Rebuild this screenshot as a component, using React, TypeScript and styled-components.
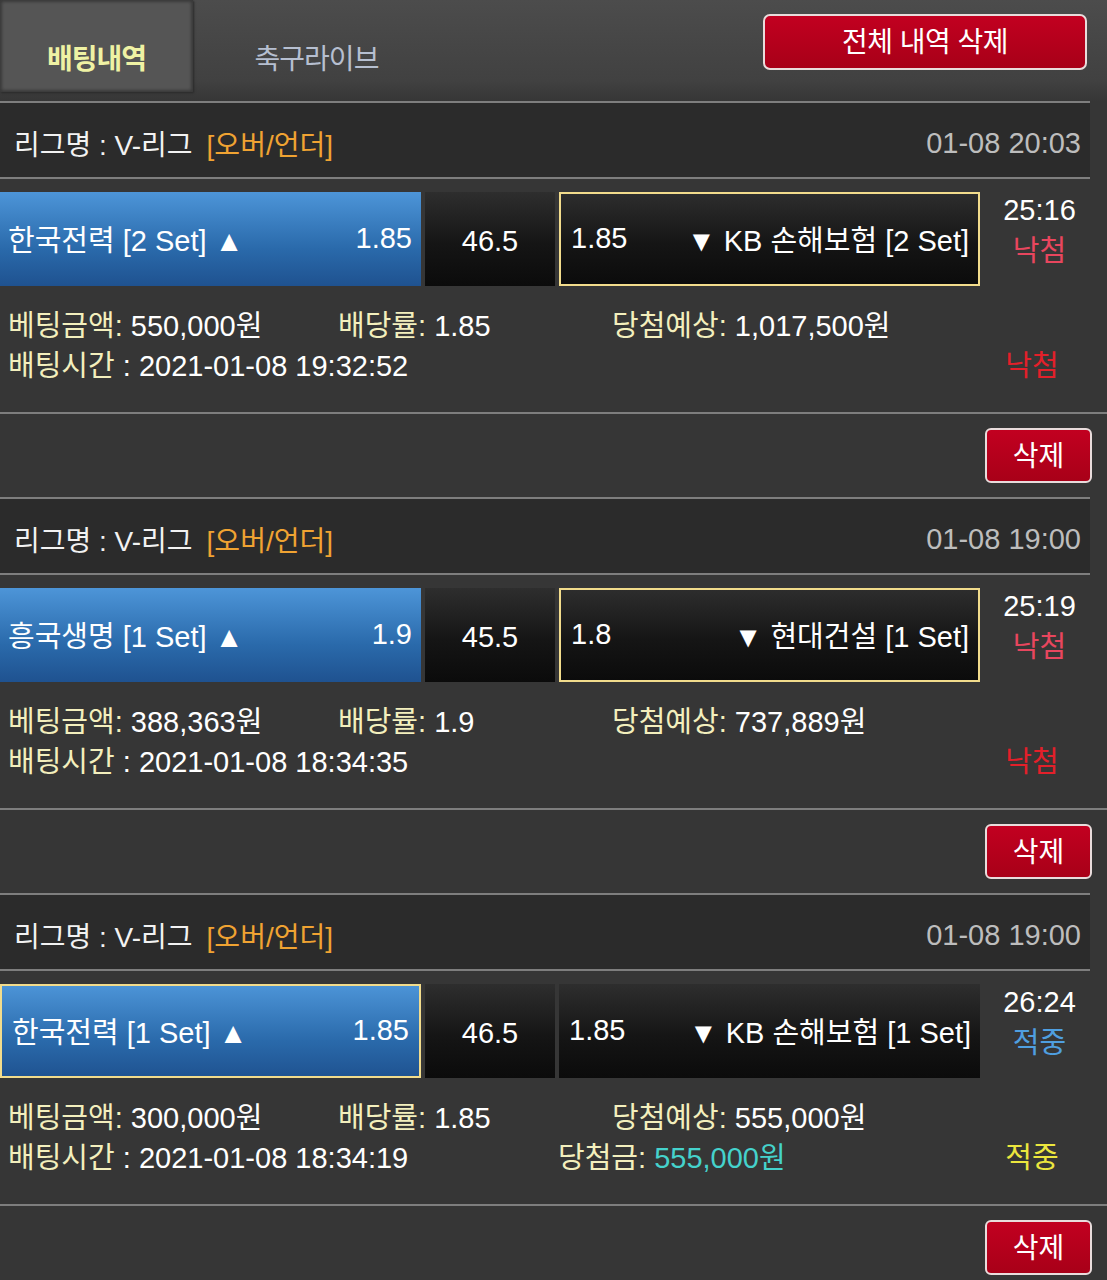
import React from "react";
import styled, { createGlobalStyle } from "styled-components";

const Global = createGlobalStyle`
  * { box-sizing: border-box; }
  html, body { margin: 0; padding: 0; background: #363636; }
  body { font-family: "Liberation Sans", "Noto Sans CJK KR", sans-serif; color: #fff; }
`;

const Page = styled.div`
  width: 100%;
  background: #363636;
`;

const TopBar = styled.div`
  height: 101px;
  display: flex;
  align-items: flex-start;
  background: linear-gradient(#4c4c4c 0%, #414141 80%, #363636 100%);
`;

const Tab = styled.div<{ $active?: boolean; $width: number }>`
  width: ${(p) => p.$width}px;
  height: 92px;
  display: flex;
  align-items: flex-end;
  justify-content: center;
  padding-bottom: 15px;
  font-size: 28px;
  font-weight: ${(p) => (p.$active ? 700 : 400)};
  letter-spacing: -1px;
  color: ${(p) => (p.$active ? "#eff2a4" : "#b6bfd0")};
  background: ${(p) => (p.$active ? "#555555" : "transparent")};
  box-shadow: ${(p) => (p.$active ? "inset 0 0 3px 2px #3a3a3a, 1px 1px 2px #2a2a2a" : "none")};
`;

const ClearAllButton = styled.button`
  margin: 14px 20px 0 auto;
  width: 324px;
  height: 56px;
  border: 2px solid #e9dcdc;
  border-radius: 7px;
  background: linear-gradient(#c20020, #a80018);
  color: #fff;
  font-family: inherit;
  font-size: 28px;
  letter-spacing: -0.5px;
  padding: 0 0 4px;
`;

const Card = styled.section`
  display: flex;
  flex-direction: column;
`;

const LeagueBar = styled.div`
  margin-right: 17px;
  height: 78px;
  border-top: 2px solid #7e7e7e;
  border-bottom: 2px solid #7e7e7e;
  background: #2b2b2b;
  display: flex;
  align-items: center;
  padding: 6px 9px 0 14px;
  font-size: 28px;
`;

const LeagueName = styled.span`
  color: #f2f2f2;
`;

const LeagueTag = styled.span`
  color: #f0a332;
  margin-left: 14px;
`;

const MatchTime = styled.span`
  margin-left: auto;
  color: #bdbdbd;
  font-size: 29px;
`;

const BetRow = styled.div`
  margin-top: 13px;
  height: 94px;
  display: grid;
  grid-template-columns: 421px 130px 421px 1fr;
  column-gap: 4px;
`;

const HomeCell = styled.div<{ $picked?: boolean }>`
  display: flex;
  align-items: center;
  justify-content: space-between;
  padding: 0 ${(p) => (p.$picked ? 10 : 9)}px 2px ${(p) => (p.$picked ? 10 : 8)}px;
  background: linear-gradient(#4d95d8, #2a6aab 60%, #1f5290);
  background-origin: border-box;
  border: ${(p) => (p.$picked ? "2px solid #f2dc8c" : "none")};
  font-size: 29px;
  color: #fff;
  white-space: nowrap;
`;

const DarkCell = styled.div<{ $picked?: boolean; $center?: boolean }>`
  display: flex;
  align-items: center;
  justify-content: ${(p) => (p.$center ? "center" : "space-between")};
  padding: ${(p) => (p.$center ? "4px 0 0" : "0 9px 2px 10px")};
  background: linear-gradient(#2e2e2e, #151515 55%, #0b0b0b);
  background-origin: border-box;
  border: ${(p) => (p.$picked ? "2px solid #f2dc8c" : "none")};
  font-size: 29px;
  color: #fff;
  white-space: nowrap;
`;

const ScoreCol = styled.div`
  display: flex;
  flex-direction: column;
  align-items: center;
  padding-right: 12px;
  margin-top: -2px;
  line-height: 41px;
`;

const Score = styled.span`
  font-size: 29px;
  color: #fff;
`;

const ScoreResult = styled.span<{ $win?: boolean }>`
  font-size: 29px;
  color: ${(p) => (p.$win ? "#4f9fe0" : "#e8465e")};
`;

const Info = styled.div`
  padding: 20px 0 26px;
  font-size: 29px;
  line-height: 40px;
  border-bottom: 2px solid #7e7e7e;
`;

const InfoRowTop = styled.div`
  display: grid;
  grid-template-columns: 330px 274px 1fr;
  padding-left: 8px;
  white-space: nowrap;
`;

const InfoRowBottom = styled.div`
  display: grid;
  grid-template-columns: 550px 1fr 110px;
  padding: 0 20px 0 8px;
  white-space: nowrap;
`;

const Label = styled.span`
  color: #f3efbd;
`;

const Value = styled.span<{ $tone?: string }>`
  color: ${(p) => p.$tone || "#ffffff"};
`;

const Result = styled.span<{ $win?: boolean }>`
  text-align: center;
  color: ${(p) => (p.$win ? "#ece63e" : "#e3202a")};
`;

const DeleteArea = styled.div`
  height: 83px;
  display: flex;
  justify-content: flex-end;
  align-items: flex-start;
  padding: 14px 15px 0 0;
`;

const DeleteButton = styled.button`
  width: 107px;
  height: 55px;
  border: 2px solid #e9dcdc;
  border-radius: 6px;
  background: linear-gradient(#c20020, #a80018);
  color: #fff;
  font-family: inherit;
  font-size: 28px;
  padding: 0 0 3px;
`;

type Bet = {
  time: string;
  home: string;
  homeOdds: string;
  line: string;
  awayOdds: string;
  away: string;
  pick: "home" | "away";
  score: string;
  win: boolean;
  amount: string;
  rate: string;
  expected: string;
  betTime: string;
  payout?: string;
};

const bets: Bet[] = [
  {
    time: "01-08 20:03",
    home: "한국전력 [2 Set] ▲",
    homeOdds: "1.85",
    line: "46.5",
    awayOdds: "1.85",
    away: "▼ KB 손해보험 [2 Set]",
    pick: "away",
    score: "25:16",
    win: false,
    amount: "550,000원",
    rate: "1.85",
    expected: "1,017,500원",
    betTime: "2021-01-08 19:32:52",
  },
  {
    time: "01-08 19:00",
    home: "흥국생명 [1 Set] ▲",
    homeOdds: "1.9",
    line: "45.5",
    awayOdds: "1.8",
    away: "▼ 현대건설 [1 Set]",
    pick: "away",
    score: "25:19",
    win: false,
    amount: "388,363원",
    rate: "1.9",
    expected: "737,889원",
    betTime: "2021-01-08 18:34:35",
  },
  {
    time: "01-08 19:00",
    home: "한국전력 [1 Set] ▲",
    homeOdds: "1.85",
    line: "46.5",
    awayOdds: "1.85",
    away: "▼ KB 손해보험 [1 Set]",
    pick: "home",
    score: "26:24",
    win: true,
    amount: "300,000원",
    rate: "1.85",
    expected: "555,000원",
    betTime: "2021-01-08 18:34:19",
    payout: "555,000원",
  },
];

function BetCard({ bet }: { bet: Bet }) {
  return (
    <Card>
      <LeagueBar>
        <LeagueName>리그명 : V-리그</LeagueName>
        <LeagueTag>[오버/언더]</LeagueTag>
        <MatchTime>{bet.time}</MatchTime>
      </LeagueBar>
      <BetRow>
        <HomeCell $picked={bet.pick === "home"}>
          <span>{bet.home}</span>
          <span>{bet.homeOdds}</span>
        </HomeCell>
        <DarkCell $center>{bet.line}</DarkCell>
        <DarkCell $picked={bet.pick === "away"}>
          <span>{bet.awayOdds}</span>
          <span>{bet.away}</span>
        </DarkCell>
        <ScoreCol>
          <Score>{bet.score}</Score>
          <ScoreResult $win={bet.win}>{bet.win ? "적중" : "낙첨"}</ScoreResult>
        </ScoreCol>
      </BetRow>
      <Info>
        <InfoRowTop>
          <span>
            <Label>베팅금액:</Label> <Value>{bet.amount}</Value>
          </span>
          <span>
            <Label>배당률:</Label> <Value>{bet.rate}</Value>
          </span>
          <span>
            <Label>당첨예상:</Label> <Value>{bet.expected}</Value>
          </span>
        </InfoRowTop>
        <InfoRowBottom>
          <span>
            <Label>배팅시간</Label> <Value>: {bet.betTime}</Value>
          </span>
          <span>
            {bet.payout && (
              <>
                <Label>당첨금:</Label> <Value $tone="#45d2cc">{bet.payout}</Value>
              </>
            )}
          </span>
          <Result $win={bet.win}>{bet.win ? "적중" : "낙첨"}</Result>
        </InfoRowBottom>
      </Info>
      <DeleteArea>
        <DeleteButton>삭제</DeleteButton>
      </DeleteArea>
    </Card>
  );
}

export default function App() {
  return (
    <Page>
      <Global />
      <TopBar>
        <Tab $active $width={193}>배팅내역</Tab>
        <Tab $width={247}>축구라이브</Tab>
        <ClearAllButton>전체 내역 삭제</ClearAllButton>
      </TopBar>
      {bets.map((b, i) => (
        <BetCard key={i} bet={b} />
      ))}
    </Page>
  );
}
